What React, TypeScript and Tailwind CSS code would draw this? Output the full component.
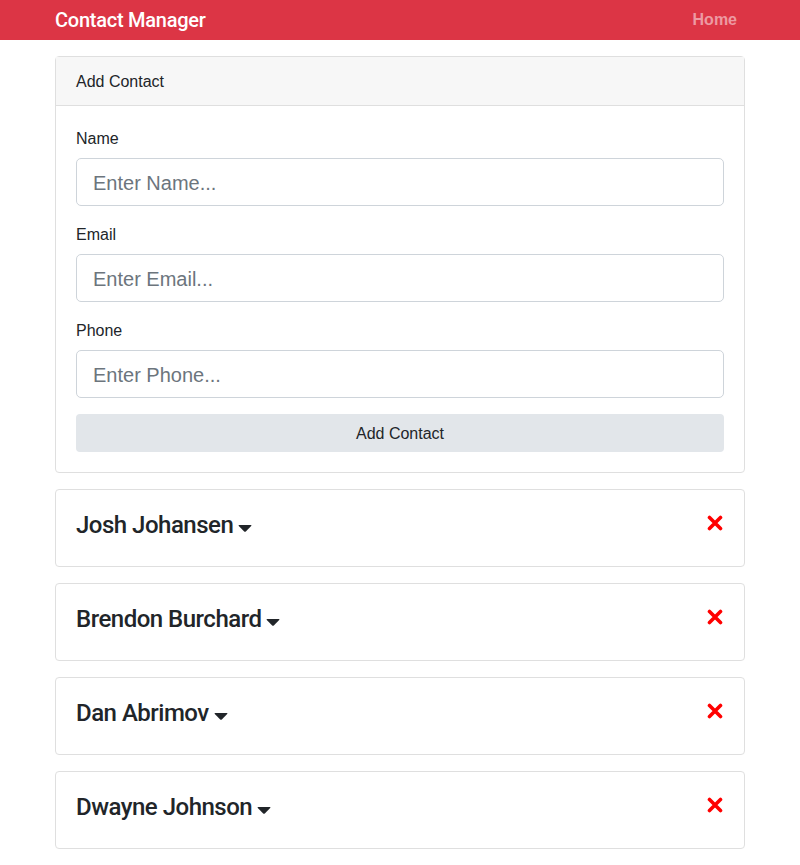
const contacts = [
  { id: 1, name: "Josh Johansen" },
  { id: 2, name: "Brendon Burchard" },
  { id: 3, name: "Dan Abrimov" },
  { id: 4, name: "Dwayne Johnson" },
];

const Caret = () => (
  <svg width="14" height="10" viewBox="0 0 14 10" className="inline-block ml-[5px] mt-[12px]">
    <path d="M1.2 2 H12.8 Q14 2 13.2 3 L7.8 8.4 Q7 9.2 6.2 8.4 L0.8 3 Q0 2 1.2 2 Z" fill="#212529" />
  </svg>
);

const Times = () => (
  <svg width="16" height="16" viewBox="0 0 16 16">
    <path d="M2.5 2.5 L13.5 13.5 M13.5 2.5 L2.5 13.5" stroke="#ff0000" strokeWidth="3.6" strokeLinecap="round" />
  </svg>
);

const Field = ({ label, placeholder }: { label: string; placeholder: string }) => (
  <div className="mb-4">
    <label className="block text-[16px] leading-[24px] pt-[1px] h-[24px] mb-2">{label}</label>
    <input
      type="text"
      placeholder={placeholder}
      className="block w-full h-[48px] px-4 pt-[2px] text-[20px] text-[#495057] placeholder:text-[#6c757d] border border-[#ced4da] rounded-[5px] bg-white outline-none"
    />
  </div>
);

export default function App() {
  return (
    <div className="min-h-[865px] bg-white text-[#212529] font-['Helvetica_Neue','Liberation_Sans',Arial,sans-serif]">
      <nav className="bg-[#dc3545] h-[40px]">
        <div className="w-[690px] mx-auto h-full flex items-center justify-between">
          <span className="text-white text-[20px] leading-[30px] font-medium tracking-[-0.25px] font-['Roboto',sans-serif]">
            Contact Manager
          </span>
          <a className="text-white/50 text-[16px] leading-[24px] px-2 font-semibold">Home</a>
        </div>
      </nav>

      <div className="w-[690px] mx-auto pt-4 flex flex-col gap-4">
        <div className="border border-[#dfdfdf] rounded-[4px]">
          <div className="bg-[#f7f7f7] border-b border-[#dfdfdf] px-5 pt-[13px] pb-[11px] text-[16px] leading-[24px]">
            Add Contact
          </div>
          <div className="p-5">
            <Field label="Name" placeholder="Enter Name..." />
            <Field label="Email" placeholder="Enter Email..." />
            <Field label="Phone" placeholder="Enter Phone..." />
            <button className="block w-full h-[38px] pt-[1px] bg-[#e2e6ea] rounded-[4px] text-[16px] text-[#212529]">
              Add Contact
            </button>
          </div>
        </div>

        {contacts.map((c) => (
          <div key={c.id} className="border border-[#dfdfdf] rounded-[4px] p-5 h-[78px]">
            <div className="flex items-start justify-between">
              <h4 className="text-[24px] leading-[29px] font-medium tracking-[-0.5px] font-['Roboto',sans-serif] flex items-start pt-[1px]">
                {c.name}
                <Caret />
              </h4>
              <span className="pt-[5px] pr-[1px]">
                <Times />
              </span>
            </div>
          </div>
        ))}
      </div>
    </div>
  );
}
